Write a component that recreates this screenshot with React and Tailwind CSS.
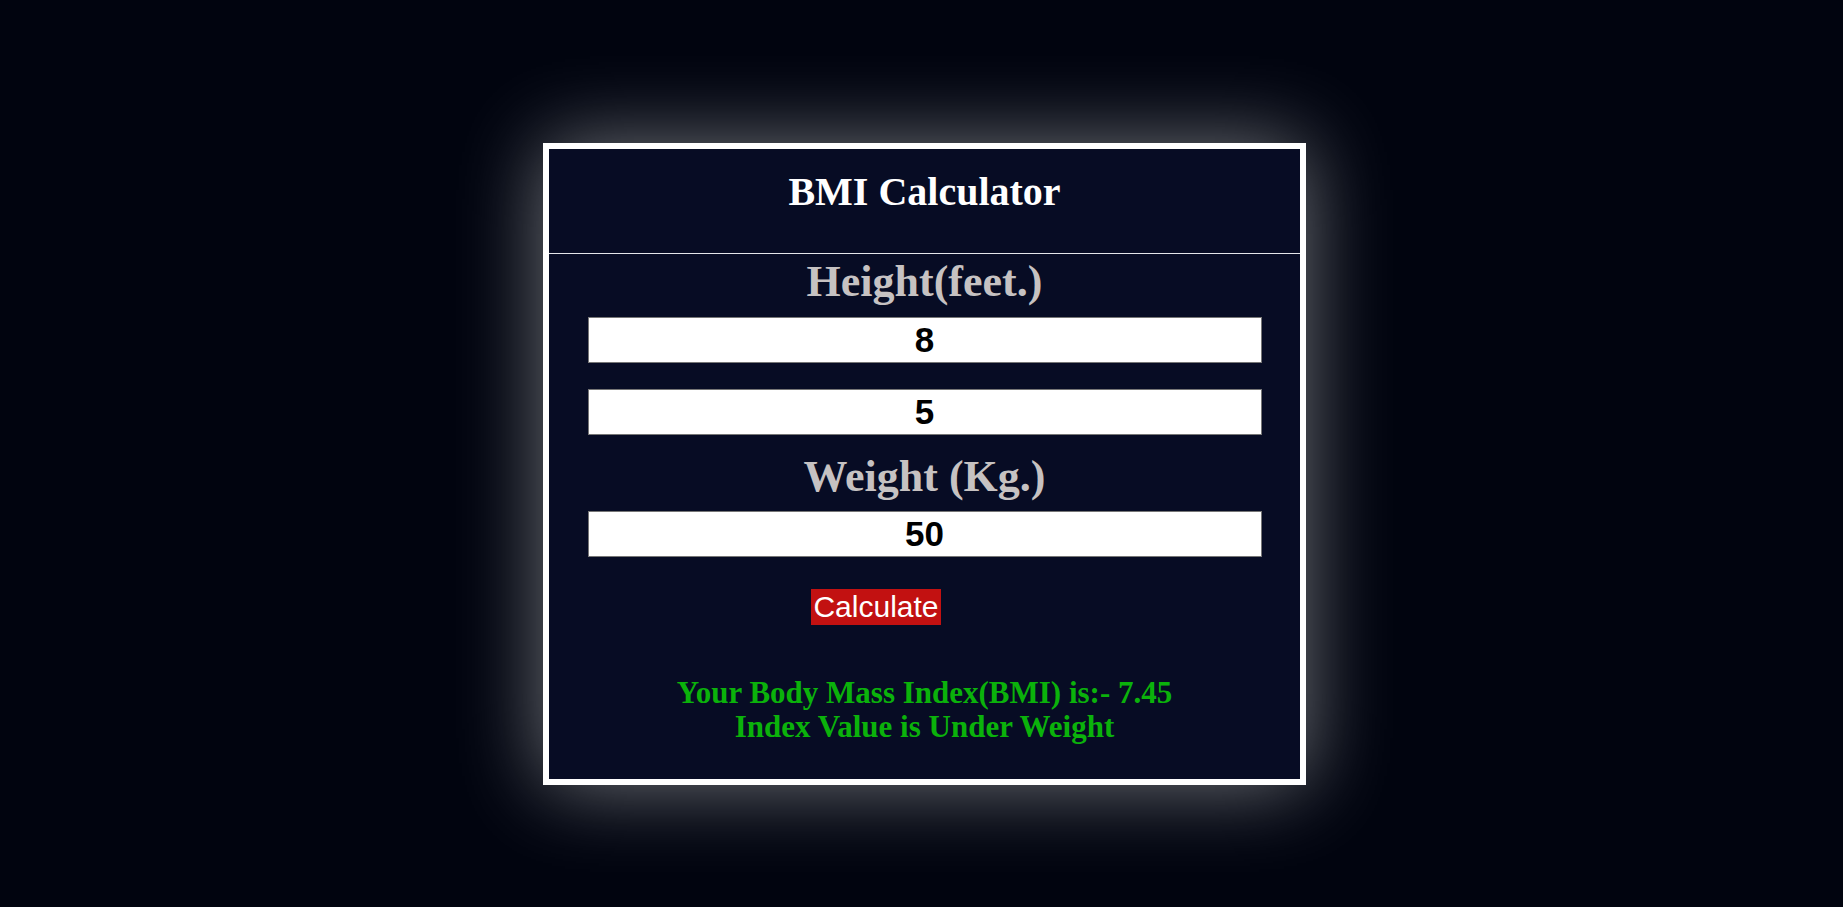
import { useState } from 'react'

const serif = { fontFamily: '"Liberation Serif", "Times New Roman", serif' }
const sans = { fontFamily: '"Liberation Sans", Arial, sans-serif' }

function NumberBox({ value, onChange, className }) {
    return (
        <input
            type="text"
            value={value}
            onChange={e => onChange(e.target.value)}
            style={sans}
            className={`mx-auto block h-[46px] w-[674px] border border-[#767676] bg-white text-center text-[35px] font-bold text-black outline-none ${className}`}
        />
    )
}

function getStatus(bmi) {
    if (bmi < 18.5) return 'Under Weight'
    if (bmi < 25) return 'Healthy'
    if (bmi < 30) return 'Over Weight'
    return 'Obese'
}

export default function App() {
    const [feet, setFeet] = useState('8')
    const [inch, setInch] = useState('5')
    const [weight, setWeight] = useState('50')
    const [result, setResult] = useState({ bmi: '7.45', status: 'Under Weight' })

    const handleCalculate = () => {
        const meters = (Number(feet) * 12 + Number(inch)) * 0.0254
        const bmi = Number(weight) / (meters * meters)
        if (!isFinite(bmi)) return
        setResult({ bmi: bmi.toFixed(2), status: getStatus(bmi) })
    }

    return (
        <div className="min-h-[907px] w-full bg-[#01040f] pt-[143px] pl-[6px] flex justify-center items-start">
            <div className="w-[763px] border-[6px] border-white bg-[#070c24] shadow-[0_0_80px_rgba(255,255,255,0.45)]">
                <div className="h-[104px] pt-[20px] text-center">
                    <h1 style={serif} className="text-[40px] font-bold leading-[45px] text-white">BMI Calculator</h1>
                </div>
                <div className="h-px bg-[#e4e6ea]"></div>

                <div className="pb-[35px] text-center">
                    <h2 style={serif} className="mt-[3px] text-[44px] font-bold leading-[50px] text-[#c6c2c2]">Height(feet.)</h2>
                    <NumberBox value={feet} onChange={setFeet} className="mt-[10px]" />
                    <NumberBox value={inch} onChange={setInch} className="mt-[26px]" />
                    <h2 style={serif} className="mt-[17px] text-[44px] font-bold leading-[50px] text-[#c6c2c2]">Weight (Kg.)</h2>
                    <NumberBox value={weight} onChange={setWeight} className="mt-[9px]" />

                    <div className="mt-[32px] flex">
                        <button
                            onClick={handleCalculate}
                            style={sans}
                            className="ml-[262px] h-[36px] w-[130px] bg-[#c21111] text-[30px] leading-[34px] text-white"
                        >Calculate</button>
                    </div>

                    <div style={serif} className="mt-[51px] text-[31px] font-bold leading-[34px] text-[#0bb20b]">
                        <p>Your Body Mass Index(BMI) is:- {result.bmi}</p>
                        <p>Index Value is {result.status}</p>
                    </div>
                </div>
            </div>
        </div>
    )
}
